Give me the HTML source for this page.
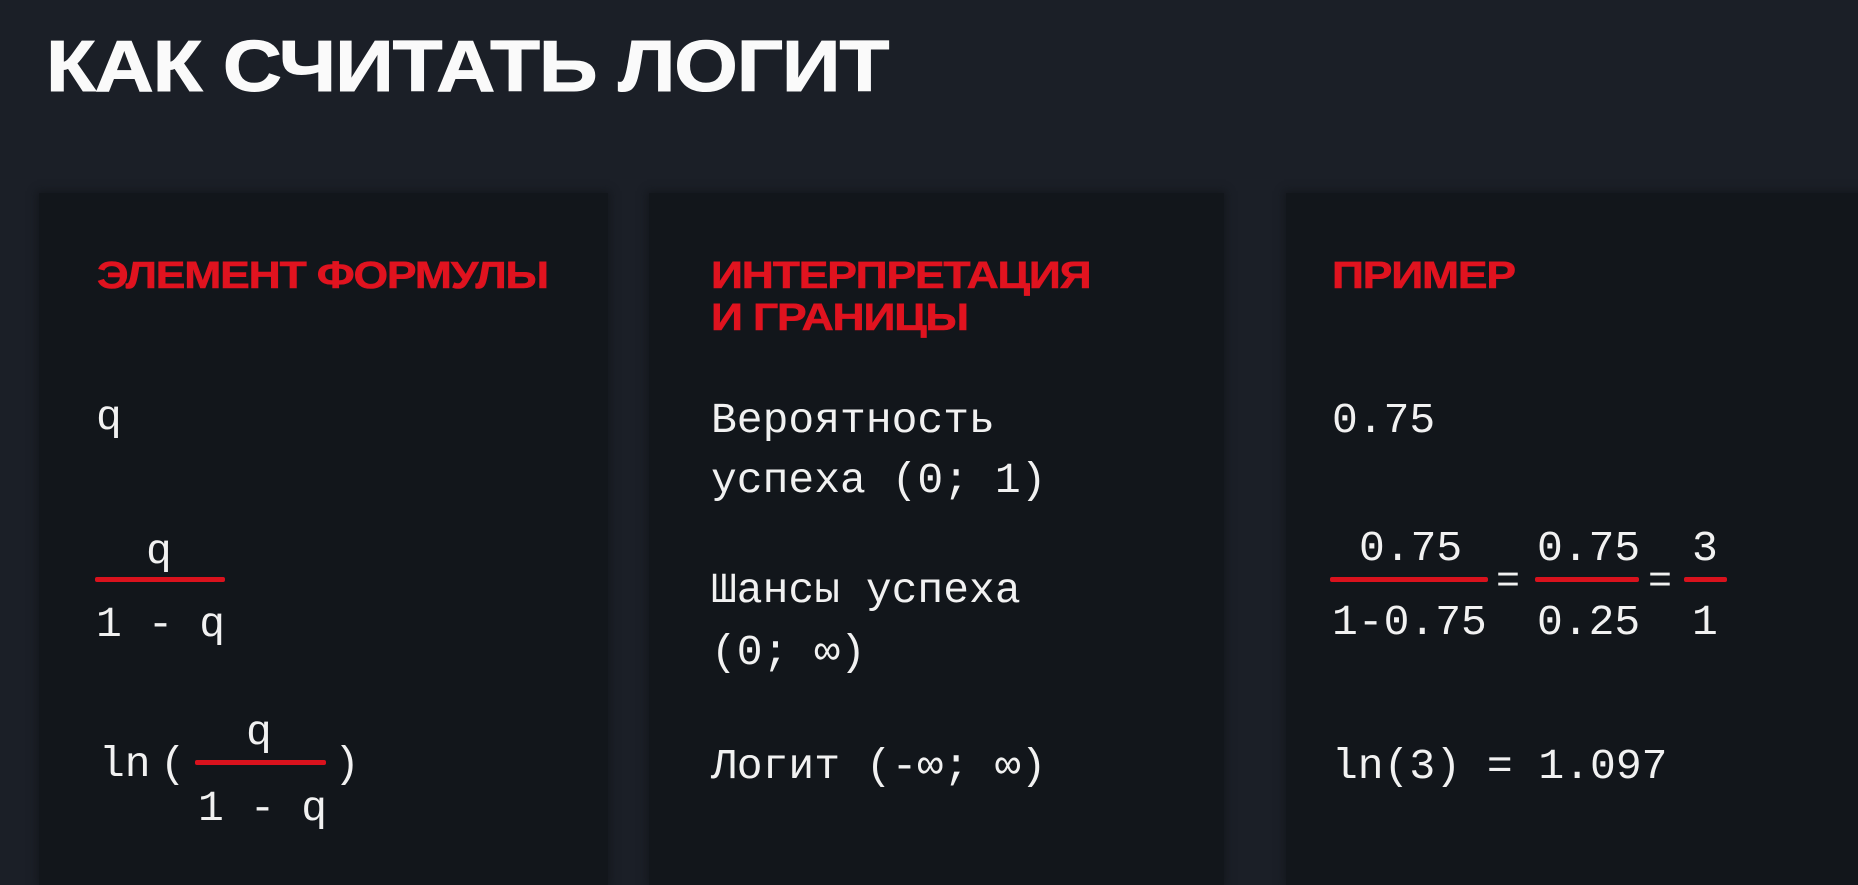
<!DOCTYPE html>
<html><head><meta charset="utf-8"><style>
html,body{margin:0;padding:0;}
body{width:1858px;height:885px;background:#1b1f27;position:relative;overflow:hidden;font-family:"Liberation Mono",monospace;color:#f1f1f1;}
.card{position:absolute;top:193px;bottom:0;background:#12161b;box-shadow:0 0 8px 2px rgba(15,18,22,.6);}
.t{position:absolute;font-size:43px;line-height:42px;white-space:pre;}
.h{position:absolute;font-family:"Liberation Sans",sans-serif;font-weight:bold;color:#e0131f;font-size:38px;line-height:42px;letter-spacing:-1px;white-space:pre;transform:scaleX(1.17);transform-origin:left top;-webkit-text-stroke:0.6px #e0131f;}
.bar{position:absolute;height:5px;background:#d9121d;border-radius:2px;}
.title{position:absolute;left:46px;top:31px;font-family:"Liberation Sans",sans-serif;font-weight:bold;font-size:72px;line-height:72px;color:#fafafa;letter-spacing:-1px;white-space:nowrap;transform:scaleX(1.135);transform-origin:left top;-webkit-text-stroke:1px #fafafa;}
</style></head><body>
<div class="title">КАК СЧИТАТЬ ЛОГИТ</div>
<div class="card" style="left:39px;width:569px"></div>
<div class="card" style="left:649px;width:575px"></div>
<div class="card" style="left:1286px;width:580px"></div>

<div class="h" style="left:97px;top:255px">ЭЛЕМЕНТ ФОРМУЛЫ</div>
<div class="h" style="left:711px;top:255px">ИНТЕРПРЕТАЦИЯ</div>
<div class="h" style="left:711px;top:297px">И ГРАНИЦЫ</div>
<div class="h" style="left:1332px;top:255px">ПРИМЕР</div>

<!-- col1 -->
<div class="t" style="left:96px;top:397px">q</div>
<div class="t" style="left:146px;top:531px">q</div>
<div class="bar" style="left:95px;top:577px;width:130px"></div>
<div class="t" style="left:96px;top:604px">1 - q</div>
<div class="t" style="left:99px;top:744px">ln</div>
<div class="t" style="left:160px;top:744px">(</div>
<div class="t" style="left:246px;top:712px">q</div>
<div class="bar" style="left:195px;top:760px;width:131px"></div>
<div class="t" style="left:198px;top:788px">1 - q</div>
<div class="t" style="left:334px;top:744px">)</div>

<!-- col2 -->
<div class="t" style="left:711px;top:400px">Вероятность</div>
<div class="t" style="left:711px;top:460px">успеха (0; 1)</div>
<div class="t" style="left:711px;top:570px">Шансы успеха</div>
<div class="t" style="left:711px;top:632px">(0; ∞)</div>
<div class="t" style="left:711px;top:746px">Логит (-∞; ∞)</div>

<!-- col3 -->
<div class="t" style="left:1332px;top:400px">0.75</div>
<div class="t" style="left:1359px;top:528px">0.75</div>
<div class="bar" style="left:1330px;top:577px;width:158px"></div>
<div class="t" style="left:1332px;top:602px">1-0.75</div>
<div class="t" style="left:1496px;top:562px;font-size:40px">=</div>
<div class="t" style="left:1537px;top:528px">0.75</div>
<div class="bar" style="left:1535px;top:577px;width:104px"></div>
<div class="t" style="left:1537px;top:602px">0.25</div>
<div class="t" style="left:1648px;top:562px;font-size:40px">=</div>
<div class="t" style="left:1692px;top:528px">3</div>
<div class="bar" style="left:1684px;top:577px;width:43px"></div>
<div class="t" style="left:1692px;top:602px">1</div>
<div class="t" style="left:1332px;top:746px">ln(3) = 1.097</div>
</body></html>
